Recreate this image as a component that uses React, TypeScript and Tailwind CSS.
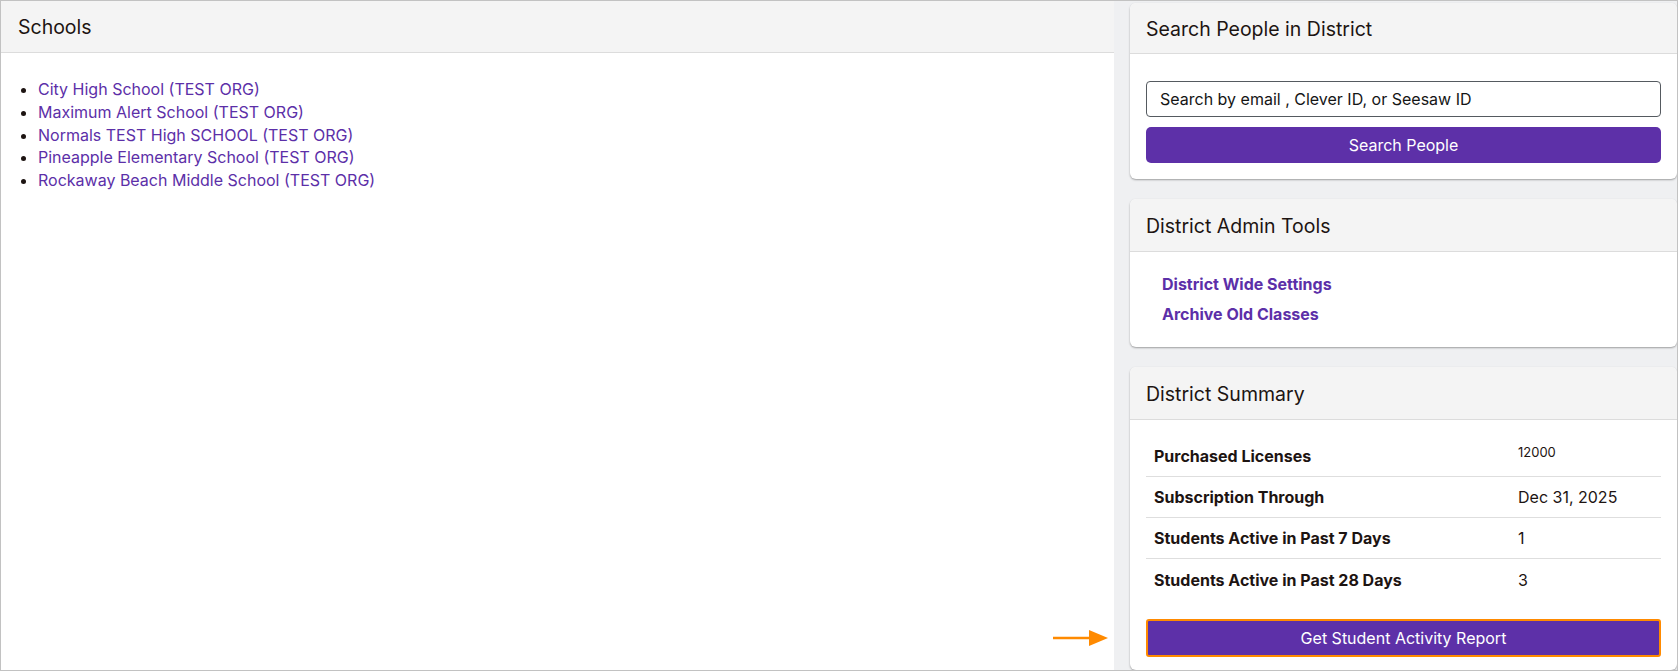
import React from "react";

const schools = [
  "City High School (TEST ORG)",
  "Maximum Alert School (TEST ORG)",
  "Normals TEST High SCHOOL (TEST ORG)",
  "Pineapple Elementary School (TEST ORG)",
  "Rockaway Beach Middle School (TEST ORG)",
];

const rows: { label: string; value: string; small?: boolean }[] = [
  { label: "Purchased Licenses", value: "12000", small: true },
  { label: "Subscription Through", value: "Dec 31, 2025" },
  { label: "Students Active in Past 7 Days", value: "1" },
  { label: "Students Active in Past 28 Days", value: "3" },
];

function CardHeader({ title, h }: { title: string; h: string }) {
  return (
    <div
      className={`${h} flex items-center px-4 pt-[3px] bg-[#f4f4f4] border-b border-[#dcdcdc] text-[19.5px] text-[#1d1412] rounded-t-md`}
    >
      {title}
    </div>
  );
}

export default function App() {
  return (
    <div
      className="relative w-[1678px] h-[671px] overflow-hidden border border-[#c2c2c2] bg-[#eff0f2] flex"
      style={{ fontFamily: "Inter, 'Noto Sans', sans-serif" }}
    >
      {/* Left panel */}
      <div className="w-[1113px] h-full bg-white flex flex-col">
        <div className="h-[52px] flex items-center px-[17px] pt-[3px] bg-[#f4f4f4] border-b border-[#dcdcdc] text-[19.5px] text-[#1d1412]">
          Schools
        </div>
        <ul className="list-disc pl-[37px] pt-[25px] text-[16px] leading-[22.75px] text-[#5c2fa8] marker:text-[#1d1412]">
          {schools.map((s) => (
            <li key={s}>
              <a href="#" className="hover:underline">
                {s}
              </a>
            </li>
          ))}
        </ul>
      </div>

      {/* Right column */}
      <div className="flex-1 ml-4 pt-[2px] flex flex-col gap-5">
        {/* Search card */}
        <div className="bg-white rounded-md shadow-[0_1px_2px_rgba(0,0,0,0.35)]">
          <CardHeader title="Search People in District" h="h-[51px]" />
          <div className="px-4 pt-[27px] pb-4 flex flex-col gap-[10px]">
            <div className="h-[36px] border border-[#555a60] rounded-[4px] flex items-center px-[13px] text-[16px] text-[#151515]">
              Search by email , Clever ID, or Seesaw ID
            </div>
            <button className="h-[36px] rounded-[5px] bg-[#5d30a8] text-white text-[16px]">
              Search People
            </button>
          </div>
        </div>

        {/* Admin tools card */}
        <div className="bg-white rounded-md shadow-[0_1px_2px_rgba(0,0,0,0.35)]">
          <CardHeader title="District Admin Tools" h="h-[53px]" />
          <div className="pl-8 pt-[17px] pb-[18px] flex flex-col text-[16px] font-bold leading-[30px] text-[#5c2fa8]">
            <a href="#">District Wide Settings</a>
            <a href="#">Archive Old Classes</a>
          </div>
        </div>

        {/* Summary card */}
        <div className="flex-1 bg-white rounded-md shadow-[0_1px_2px_rgba(0,0,0,0.35)]">
          <CardHeader title="District Summary" h="h-[53px]" />
          <div className="px-4 pt-4">
            <div className="flex flex-col">
              {rows.map((r, i) => (
                <div
                  key={r.label}
                  className={`h-[41px] grid grid-cols-[364px_1fr] items-center text-[#1d1412] ${
                    i < rows.length - 1 ? "border-b border-[#dedede]" : ""
                  }`}
                >
                  <div className="pl-2 text-[16px] font-bold">{r.label}</div>
                  <div className={`pl-2 ${r.small ? "text-[13px] -mt-[6px]" : "text-[16px]"}`}>
                    {r.value}
                  </div>
                </div>
              ))}
            </div>
            <button className="mt-[19px] w-full h-[38px] rounded-[3px] bg-[#5d30a8] border-2 border-[#ff8a00] text-white text-[16px]">
              Get Student Activity Report
            </button>
          </div>
        </div>
      </div>

      {/* Annotation arrow */}
      <svg
        className="absolute left-[1052px] top-[628px]"
        width="56"
        height="18"
        viewBox="0 0 56 18"
      >
        <line x1="0" y1="9" x2="40" y2="9" stroke="#ff8a00" strokeWidth="2.5" />
        <polygon points="36,1 55,9 36,17" fill="#ff8a00" />
      </svg>
    </div>
  );
}
